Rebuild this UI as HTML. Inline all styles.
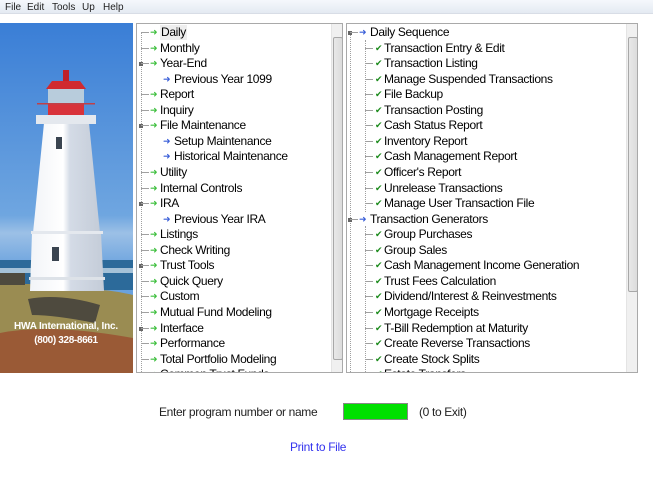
<!DOCTYPE html>
<html><head><meta charset="utf-8"><style>
*{margin:0;padding:0;box-sizing:border-box}
body{width:653px;height:478px;background:#fff;font-family:"Liberation Sans",Arial,sans-serif;font-size:12px;letter-spacing:-0.35px;color:#000;position:relative;overflow:hidden}
.menu{position:absolute;left:0;top:0;width:653px;height:14px;background:linear-gradient(#f5f8fc,#e4eaf2);border-bottom:1px solid #d8dde6;font-size:10px;color:#222;letter-spacing:0}
.menu span{position:absolute;top:2px}
.box{position:absolute;top:23px;height:350px;border:1px solid #a9a9a9;background:#fff;overflow:hidden}
.row{position:absolute;height:15px;line-height:15px;white-space:nowrap}
.ga{color:#3fbf3f;font-size:9px;position:absolute;top:0}
.ba{color:#3a5fd8;font-size:9px;position:absolute;top:0}
.ck{color:#1a8a1a;font-size:9px;position:absolute;top:0}
.sb{position:absolute;top:0;width:12px;height:348px;background:#f0f0f0;border-left:1px solid #e4e4e4}
.th{position:absolute;left:1px;width:10px;background:linear-gradient(90deg,#e8e8e8,#dcdcdc);border:1px solid #a8a8a8;border-radius:2px}
.vl{position:absolute;border-left:1px dotted #a0a0a0}
.hl{position:absolute;border-top:1px solid #a0a0a0;width:8px}
.ex{position:absolute;width:4px;height:4px;background:#666}
</style></head><body>
<div class="menu"><span style="left:5px">File</span><span style="left:27px">Edit</span><span style="left:52px">Tools</span><span style="left:82px">Up</span><span style="left:103px">Help</span></div>

<svg style="position:absolute;left:0;top:23px" width="133" height="350" viewBox="0 0 133 350">
<defs><linearGradient id="sky" x1="0" y1="0" x2="0" y2="1"><stop offset="0" stop-color="#3a7ed6"/><stop offset=".55" stop-color="#6fa6e0"/><stop offset=".6" stop-color="#9cc0e6"/><stop offset=".7" stop-color="#6aa2de"/></linearGradient>
<linearGradient id="tw" x1="0" y1="0" x2="1" y2="0"><stop offset="0" stop-color="#f2f4f8"/><stop offset=".45" stop-color="#ffffff"/><stop offset=".55" stop-color="#d4dbe6"/><stop offset="1" stop-color="#c4ccd8"/></linearGradient></defs>
<rect width="133" height="350" fill="url(#sky)"/>
<rect y="237" width="133" height="30" fill="#2c6a9a"/>
<rect y="245" width="133" height="5" fill="#d8e8f2" opacity=".7"/>
<path d="M0 262 Q40 258 70 268 Q100 264 133 272 L133 350 L0 350Z" fill="#9a8c52"/>
<path d="M0 310 Q50 300 133 315 L133 350 L0 350Z" fill="#9a5a36"/>
<path d="M28 276 Q60 270 100 282 L95 300 Q55 292 32 292Z" fill="#4e4a3e"/>
<rect x="0" y="250" width="25" height="12" fill="#4e4a3e"/>
<polygon points="44,100 89,100 100,210 33,210" fill="url(#tw)"/>
<polygon points="32,210 101,210 104,268 30,268" fill="url(#tw)"/>
<rect x="31" y="208" width="72" height="3" fill="#e4e8ee"/>
<rect x="29" y="254" width="76" height="3" fill="#dde2e8"/>
<rect x="52" y="224" width="7" height="14" fill="#3a4450"/>
<rect x="56" y="114" width="6" height="12" fill="#3a4450"/>
<rect x="36" y="92" width="60" height="9" fill="#e4e8ee"/>
<rect x="48" y="80" width="36" height="12" fill="#d8323a"/>
<rect x="37" y="80" width="58" height="1.5" fill="#c04048"/>
<rect x="48" y="66" width="36" height="14" fill="#b8ccdc"/>
<path d="M46 66 L86 66 L80 58 L52 58Z" fill="#d02a30"/>
<rect x="63" y="47" width="6" height="11" fill="#c02028"/>
<text x="66" y="306" text-anchor="middle" fill="#fff" font-family="Liberation Sans,sans-serif" font-size="10" font-weight="bold" letter-spacing="-0.2">HWA International, Inc.</text>
<text x="66" y="320" text-anchor="middle" fill="#fff" font-family="Liberation Sans,sans-serif" font-size="10" font-weight="bold">(800) 328-8661</text>
</svg>

<div class="box" style="left:136px;width:207px">
<div class="vl" style="left:4px;top:8px;height:340px"></div>
<div class="row" style="top:1px;left:0"><span class="hl" style="left:4px;top:7px"></span><span class="ga" style="left:13px">➜</span><span style="position:absolute;left:23px;background:#eee;padding:0 1px">Daily</span></div>
<div class="row" style="top:16.5px;left:0"><span class="hl" style="left:4px;top:7px"></span><span class="ga" style="left:13px">➜</span><span style="position:absolute;left:23px">Monthly</span></div>
<div class="row" style="top:32px;left:0"><span class="ex" style="left:2px;top:6px"></span><span class="hl" style="left:4px;top:7px"></span><span class="ga" style="left:13px">➜</span><span style="position:absolute;left:23px">Year-End</span></div>
<div class="row" style="top:47.6px;left:0"><span class="ba" style="left:26px">➜</span><span style="position:absolute;left:37px">Previous Year 1099</span></div>
<div class="row" style="top:63.2px;left:0"><span class="hl" style="left:4px;top:7px"></span><span class="ga" style="left:13px">➜</span><span style="position:absolute;left:23px">Report</span></div>
<div class="row" style="top:78.8px;left:0"><span class="hl" style="left:4px;top:7px"></span><span class="ga" style="left:13px">➜</span><span style="position:absolute;left:23px">Inquiry</span></div>
<div class="row" style="top:94.3px;left:0"><span class="ex" style="left:2px;top:6px"></span><span class="hl" style="left:4px;top:7px"></span><span class="ga" style="left:13px">➜</span><span style="position:absolute;left:23px">File Maintenance</span></div>
<div class="row" style="top:109.9px;left:0"><span class="ba" style="left:26px">➜</span><span style="position:absolute;left:37px">Setup Maintenance</span></div>
<div class="row" style="top:125.4px;left:0"><span class="ba" style="left:26px">➜</span><span style="position:absolute;left:37px">Historical Maintenance</span></div>
<div class="row" style="top:141px;left:0"><span class="hl" style="left:4px;top:7px"></span><span class="ga" style="left:13px">➜</span><span style="position:absolute;left:23px">Utility</span></div>
<div class="row" style="top:156.5px;left:0"><span class="hl" style="left:4px;top:7px"></span><span class="ga" style="left:13px">➜</span><span style="position:absolute;left:23px">Internal Controls</span></div>
<div class="row" style="top:172px;left:0"><span class="ex" style="left:2px;top:6px"></span><span class="hl" style="left:4px;top:7px"></span><span class="ga" style="left:13px">➜</span><span style="position:absolute;left:23px">IRA</span></div>
<div class="row" style="top:187.6px;left:0"><span class="ba" style="left:26px">➜</span><span style="position:absolute;left:37px">Previous Year IRA</span></div>
<div class="row" style="top:203.2px;left:0"><span class="hl" style="left:4px;top:7px"></span><span class="ga" style="left:13px">➜</span><span style="position:absolute;left:23px">Listings</span></div>
<div class="row" style="top:218.7px;left:0"><span class="hl" style="left:4px;top:7px"></span><span class="ga" style="left:13px">➜</span><span style="position:absolute;left:23px">Check Writing</span></div>
<div class="row" style="top:234.3px;left:0"><span class="ex" style="left:2px;top:6px"></span><span class="hl" style="left:4px;top:7px"></span><span class="ga" style="left:13px">➜</span><span style="position:absolute;left:23px">Trust Tools</span></div>
<div class="row" style="top:249.8px;left:0"><span class="hl" style="left:4px;top:7px"></span><span class="ga" style="left:13px">➜</span><span style="position:absolute;left:23px">Quick Query</span></div>
<div class="row" style="top:265.4px;left:0"><span class="hl" style="left:4px;top:7px"></span><span class="ga" style="left:13px">➜</span><span style="position:absolute;left:23px">Custom</span></div>
<div class="row" style="top:281px;left:0"><span class="hl" style="left:4px;top:7px"></span><span class="ga" style="left:13px">➜</span><span style="position:absolute;left:23px">Mutual Fund Modeling</span></div>
<div class="row" style="top:296.5px;left:0"><span class="ex" style="left:2px;top:6px"></span><span class="hl" style="left:4px;top:7px"></span><span class="ga" style="left:13px">➜</span><span style="position:absolute;left:23px">Interface</span></div>
<div class="row" style="top:312px;left:0"><span class="hl" style="left:4px;top:7px"></span><span class="ga" style="left:13px">➜</span><span style="position:absolute;left:23px">Performance</span></div>
<div class="row" style="top:327.6px;left:0"><span class="hl" style="left:4px;top:7px"></span><span class="ga" style="left:13px">➜</span><span style="position:absolute;left:23px">Total Portfolio Modeling</span></div>
<div class="row" style="top:343.2px;left:0"><span class="ga" style="left:13px">➜</span><span style="position:absolute;left:23px">Common Trust Funds</span></div>
<div class="sb" style="left:194px"><div class="th" style="top:13px;height:323px"></div></div>
</div>

<div class="box" style="left:346px;width:292px">
<div class="vl" style="left:3px;top:8px;height:340px"></div>
<div class="vl" style="left:18px;top:16px;height:172px"></div>
<div class="vl" style="left:18px;top:202px;height:146px"></div>
<div class="row" style="top:1px"><span class="ex" style="left:1px;top:6px"></span><span class="hl" style="left:3px;top:7px"></span><span class="ba" style="left:12px">➜</span><span style="position:absolute;left:23px">Daily Sequence</span></div>
<div class="row" style="top:16.5px"><span class="hl" style="left:18px;top:7px"></span><span class="ck" style="left:28px">✔</span><span style="position:absolute;left:37px">Transaction Entry &amp; Edit</span></div>
<div class="row" style="top:32px"><span class="hl" style="left:18px;top:7px"></span><span class="ck" style="left:28px">✔</span><span style="position:absolute;left:37px">Transaction Listing</span></div>
<div class="row" style="top:47.6px"><span class="hl" style="left:18px;top:7px"></span><span class="ck" style="left:28px">✔</span><span style="position:absolute;left:37px">Manage Suspended Transactions</span></div>
<div class="row" style="top:63.2px"><span class="hl" style="left:18px;top:7px"></span><span class="ck" style="left:28px">✔</span><span style="position:absolute;left:37px">File Backup</span></div>
<div class="row" style="top:78.8px"><span class="hl" style="left:18px;top:7px"></span><span class="ck" style="left:28px">✔</span><span style="position:absolute;left:37px">Transaction Posting</span></div>
<div class="row" style="top:94.3px"><span class="hl" style="left:18px;top:7px"></span><span class="ck" style="left:28px">✔</span><span style="position:absolute;left:37px">Cash Status Report</span></div>
<div class="row" style="top:109.9px"><span class="hl" style="left:18px;top:7px"></span><span class="ck" style="left:28px">✔</span><span style="position:absolute;left:37px">Inventory Report</span></div>
<div class="row" style="top:125.4px"><span class="hl" style="left:18px;top:7px"></span><span class="ck" style="left:28px">✔</span><span style="position:absolute;left:37px">Cash Management Report</span></div>
<div class="row" style="top:141px"><span class="hl" style="left:18px;top:7px"></span><span class="ck" style="left:28px">✔</span><span style="position:absolute;left:37px">Officer's Report</span></div>
<div class="row" style="top:156.5px"><span class="hl" style="left:18px;top:7px"></span><span class="ck" style="left:28px">✔</span><span style="position:absolute;left:37px">Unrelease Transactions</span></div>
<div class="row" style="top:172px"><span class="hl" style="left:18px;top:7px"></span><span class="ck" style="left:28px">✔</span><span style="position:absolute;left:37px">Manage User Transaction File</span></div>
<div class="row" style="top:187.6px"><span class="ex" style="left:1px;top:6px"></span><span class="hl" style="left:3px;top:7px"></span><span class="ba" style="left:12px">➜</span><span style="position:absolute;left:23px">Transaction Generators</span></div>
<div class="row" style="top:203.2px"><span class="hl" style="left:18px;top:7px"></span><span class="ck" style="left:28px">✔</span><span style="position:absolute;left:37px">Group Purchases</span></div>
<div class="row" style="top:218.7px"><span class="hl" style="left:18px;top:7px"></span><span class="ck" style="left:28px">✔</span><span style="position:absolute;left:37px">Group Sales</span></div>
<div class="row" style="top:234.3px"><span class="hl" style="left:18px;top:7px"></span><span class="ck" style="left:28px">✔</span><span style="position:absolute;left:37px">Cash Management Income Generation</span></div>
<div class="row" style="top:249.8px"><span class="hl" style="left:18px;top:7px"></span><span class="ck" style="left:28px">✔</span><span style="position:absolute;left:37px">Trust Fees Calculation</span></div>
<div class="row" style="top:265.4px"><span class="hl" style="left:18px;top:7px"></span><span class="ck" style="left:28px">✔</span><span style="position:absolute;left:37px">Dividend/Interest &amp; Reinvestments</span></div>
<div class="row" style="top:281px"><span class="hl" style="left:18px;top:7px"></span><span class="ck" style="left:28px">✔</span><span style="position:absolute;left:37px">Mortgage Receipts</span></div>
<div class="row" style="top:296.5px"><span class="hl" style="left:18px;top:7px"></span><span class="ck" style="left:28px">✔</span><span style="position:absolute;left:37px">T-Bill Redemption at Maturity</span></div>
<div class="row" style="top:312px"><span class="hl" style="left:18px;top:7px"></span><span class="ck" style="left:28px">✔</span><span style="position:absolute;left:37px">Create Reverse Transactions</span></div>
<div class="row" style="top:327.6px"><span class="hl" style="left:18px;top:7px"></span><span class="ck" style="left:28px">✔</span><span style="position:absolute;left:37px">Create Stock Splits</span></div>
<div class="row" style="top:343.2px"><span class="ck" style="left:28px">✔</span><span style="position:absolute;left:37px">Estate Transfers</span></div>
<div class="sb" style="left:279px"><div class="th" style="top:13px;height:255px"></div></div>
</div>

<div style="position:absolute;left:159px;top:405px;font-size:12px;color:#222">Enter program number or name</div>
<div style="position:absolute;left:343px;top:403px;width:65px;height:17px;background:#00e000;border:1px solid #888"></div>
<div style="position:absolute;left:419px;top:405px;font-size:12px;color:#222">(0 to Exit)</div>
<div style="position:absolute;left:290px;top:440px;font-size:12px;color:#3333ee">Print to File</div>
</body></html>
